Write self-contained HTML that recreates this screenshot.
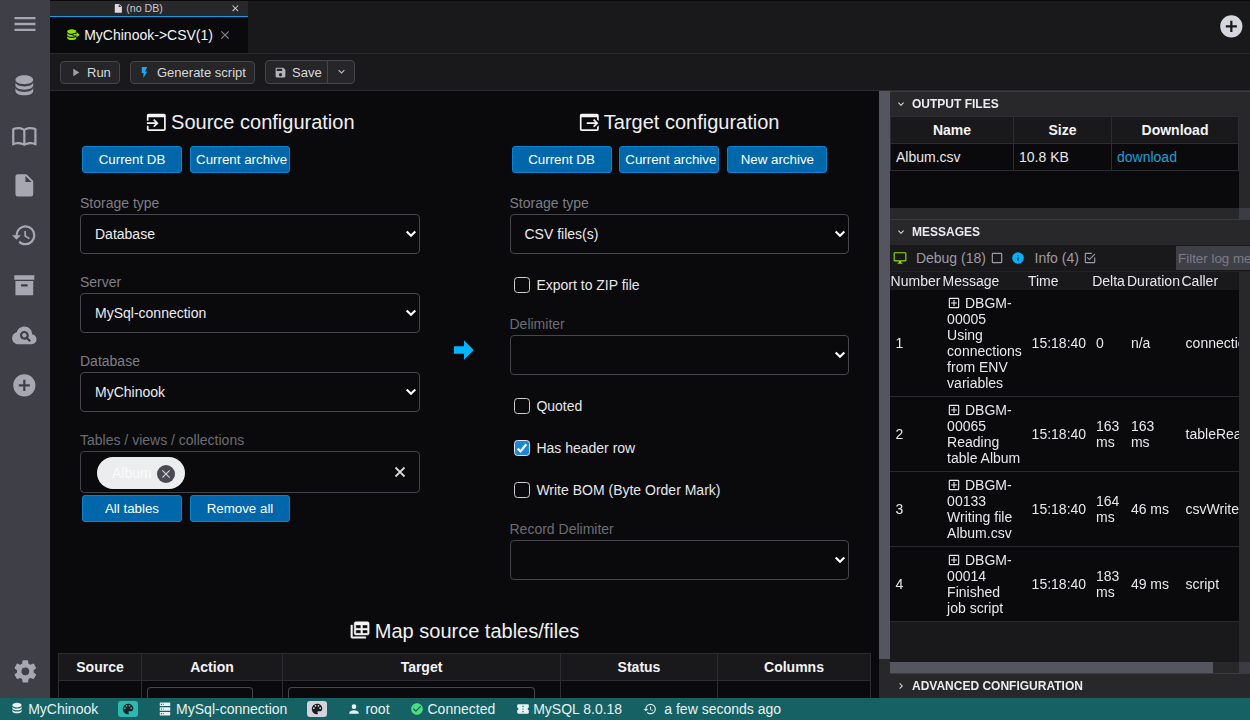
<!DOCTYPE html>
<html>
<head>
<meta charset="utf-8">
<title>DbGate</title>
<style>
*{box-sizing:border-box;}
html,body{margin:0;padding:0;}
body{width:1250px;height:720px;overflow:hidden;background:#0a0a0c;font-family:"Liberation Sans",sans-serif;font-size:14px;color:#dedee2;position:relative;}
.abs{position:absolute;}
svg{display:block;}
svg path{fill:currentColor;}
/* left icon bar */
#iconbar{left:0;top:0;width:50px;height:698px;background:#3f3f48;color:#a7a7b2;}
#iconbar svg{position:absolute;left:11.4px;width:26.67px;height:26.67px;}
/* tabs */
#tabsbar{left:50px;top:0;width:1200px;height:53px;background:#19191c;border-top:1px solid #0a0a0c;}
#dbgroup{left:50px;top:1px;width:198px;height:15px;background:#28282b;font-size:11px;color:#c9c9cf;}
#dbline{left:50px;top:16px;width:198px;height:1px;background:#0ca2ec;}
#tab{left:50px;top:17px;width:198px;height:36px;background:#0a0a0c;}
#toolbarline1{left:50px;top:53px;width:1200px;height:1px;background:#2a2a2e;}
#toolbar{left:50px;top:54px;width:1200px;height:36px;background:#19191c;}
#toolbarline2{left:50px;top:90px;width:1200px;height:1px;background:#2e2e32;}
.tbtn{position:absolute;top:61px;height:23px;border:1px solid #45454b;border-radius:4px;background:#262629;color:#d8d8dc;font-size:13px;}
/* main */
.h2{position:absolute;font-size:20px;color:#f0f0f3;white-space:nowrap;line-height:24px;}
.bbtn{position:absolute;width:100px;height:27px;background:#0068aa;border:1px solid #0683d2;border-radius:3px;color:#fff;font-size:13.33px;text-align:center;line-height:25px;white-space:nowrap;overflow:visible;}
.lbl{position:absolute;color:#7e7e86;font-size:14px;line-height:16px;white-space:nowrap;}
.sel{position:absolute;height:40px;border:1px solid #46464c;border-radius:4px;background:#0a0a0c;color:#ececf0;font-size:14px;line-height:38px;padding-left:14px;white-space:nowrap;}
.sel svg{position:absolute;right:2.4px;top:14px;width:12px;height:12px;color:#fff;}
.chk{position:absolute;width:16px;height:16px;border:1.5px solid #cfcfd3;border-radius:3.5px;background:#0a0a0c;}
.chklbl{position:absolute;font-size:14px;line-height:16px;color:#e6e6ea;white-space:nowrap;}
.mth{position:absolute;top:654px;height:26px;background:#19191c;color:#f4f4f6;font-weight:bold;font-size:14px;text-align:center;line-height:26px;}
.mtd{position:absolute;top:681px;height:17px;background:#0a0a0c;}
.inp{position:absolute;top:6px;height:20px;border:1px solid #46464c;border-bottom:none;border-radius:4px 4px 0 0;}
/* right panel */
.whead{position:absolute;left:890px;width:360px;background:#28282b;border-top:1px solid #3a3a40;font-size:12px;font-weight:bold;color:#ececf0;white-space:nowrap;}
.whead span{position:absolute;left:22px;top:5px;line-height:14px;will-change:transform;}
.whead svg{position:absolute;left:5px;top:5px;width:12px;height:12px;}
.oth,.otd{position:absolute;height:26px;line-height:26px;font-size:14px;white-space:nowrap;}
.oth{top:117px;background:#19191c;color:#f4f4f6;font-weight:bold;text-align:center;}
.otd{top:144px;background:#0a0a0c;color:#e8e8ec;padding-left:5px;}
.mc{position:absolute;font-size:14px;line-height:16px;white-space:nowrap;color:#e8e8ec;}
#statusbar{left:0;top:698px;width:1250px;height:22px;background:#156163;color:#e8f2f2;font-size:14px;}
#statusbar .it{position:absolute;top:0;line-height:22px;white-space:nowrap;}
#statusbar svg{position:absolute;}
</style>
</head>
<body>
<!-- ICON BAR -->
<div id="iconbar" class="abs">
<svg viewBox="0 0 24 24" style="top:10.05px;left:10.85px;width:28px;height:28px"><path d="M3,6H21V8H3V6M3,11H21V13H3V11M3,16H21V18H3V16Z"/></svg>
<svg viewBox="0 0 24 24" style="top:72.3px"><path d="M12,3C7.58,3 4,4.79 4,7C4,9.21 7.58,11 12,11C16.42,11 20,9.21 20,7C20,4.790 16.42,3 12,3M4,9V12C4,14.21 7.58,16 12,16C16.42,16 20,14.21 20,12V9C20,11.21 16.42,13 12,13C7.58,13 4,11.21 4,9M4,14V17C4,19.21 7.58,21 12,21C16.42,21 20,19.21 20,17V14C20,16.21 16.42,18 12,18C7.58,18 4,16.21 4,14Z"/></svg>
<svg viewBox="0 0 24 24" style="top:122.3px"><path d="M12 21.5C10.65 20.65 8.2 20 6.5 20C4.85 20 3.15 20.3 1.75 21.05C1.65 21.1 1.6 21.1 1.5 21.1C1.25 21.1 1 20.85 1 20.6V6C1.6 5.55 2.25 5.25 3 5C4.11 4.65 5.33 4.5 6.5 4.5C8.45 4.5 10.55 4.9 12 6C13.45 4.9 15.55 4.5 17.5 4.5C18.67 4.5 19.89 4.65 21 5C21.75 5.25 22.4 5.55 23 6V20.6C23 20.85 22.75 21.1 22.5 21.1C22.4 21.1 22.35 21.1 22.25 21.05C20.85 20.3 19.15 20 17.5 20C15.8 20 13.35 20.65 12 21.5M11 7.5C9.64 6.9 7.84 6.5 6.5 6.5C5.3 6.5 4.1 6.65 3 7V18.5C4.1 18.15 5.3 18 6.5 18C7.84 18 9.64 18.4 11 19V7.5M13 19C14.36 18.4 16.16 18 17.5 18C18.7 18 19.9 18.15 21 18.5V7C19.9 6.65 18.7 6.5 17.5 6.5C16.16 6.5 14.36 6.9 13 7.5V19Z"/></svg>
<svg viewBox="0 0 24 24" style="top:172.3px"><path d="M13,9V3.5L18.5,9M6,2C4.89,2 4,2.89 4,4V20A2,2 0 0,0 6,22H18A2,2 0 0,0 20,20V8L14,2H6Z"/></svg>
<svg viewBox="0 0 24 24" style="top:222.3px"><path d="M13.5,8H12V13L16.28,15.54L17,14.33L13.5,12.25V8M13,3A9,9 0 0,0 4,12H1L4.96,16.03L9,12H6A7,7 0 0,1 13,5A7,7 0 0,1 20,12A7,7 0 0,1 13,19C11.07,19 9.32,18.21 8.06,16.94L6.64,18.36C8.27,20 10.5,21 13,21A9,9 0 0,0 22,12A9,9 0 0,0 13,3"/></svg>
<svg viewBox="0 0 24 24" style="top:272.3px"><path d="M3,3H21V7H3V3M4,8H20V21H4V8M9.5,11A0.5,0.5 0 0,0 9,11.5V13H15V11.5A0.5,0.5 0 0,0 14.5,11H9.5Z"/></svg>
<svg viewBox="0 0 24 24" style="top:322.3px"><path d="M21.86 12.5C21.1 11.63 20.15 11.13 19 11C19 9.05 18.32 7.4 16.96 6.04C15.6 4.68 13.95 4 12 4C10.42 4 9 4.47 7.75 5.43S5.67 7.62 5.25 9.15C4 9.43 2.96 10.08 2.17 11.1S1 13.28 1 14.58C1 16.09 1.54 17.38 2.61 18.43C3.69 19.5 5 20 6.5 20H18.5C19.75 20 20.81 19.56 21.69 18.69C22.56 17.81 23 16.75 23 15.5C23 14.35 22.62 13.35 21.86 12.5M16.57 18L14 15.43C13.43 15.79 12.74 16 12 16C9.79 16 8 14.21 8 12S9.79 8 12 8 16 9.79 16 12C16 12.74 15.79 13.43 15.43 14L18 16.57L16.57 18M14 12C14 13.11 13.11 14 12 14S10 13.11 10 12 10.9 10 12 10 14 10.9 14 12Z"/></svg>
<svg viewBox="0 0 24 24" style="top:372.3px"><path d="M17,13H13V17H11V13H7V11H11V7H13V11H17M12,2A10,10 0 0,0 2,12A10,10 0 0,0 12,22A10,10 0 0,0 22,12A10,10 0 0,0 12,2Z"/></svg>
<svg viewBox="0 0 24 24" style="top:658.1px;left:12.1px"><path d="M12,15.5A3.5,3.5 0 0,1 8.5,12A3.5,3.5 0 0,1 12,8.5A3.5,3.5 0 0,1 15.5,12A3.5,3.5 0 0,1 12,15.5M19.43,12.97C19.47,12.65 19.5,12.33 19.5,12C19.5,11.67 19.47,11.34 19.43,11L21.54,9.37C21.73,9.22 21.78,8.95 21.66,8.73L19.66,5.27C19.54,5.05 19.27,4.96 19.05,5.05L16.56,6.05C16.04,5.66 15.5,5.32 14.87,5.07L14.5,2.42C14.46,2.18 14.25,2 14,2H10C9.75,2 9.54,2.18 9.5,2.42L9.13,5.07C8.5,5.32 7.96,5.66 7.44,6.05L4.95,5.05C4.73,4.96 4.46,5.05 4.34,5.27L2.34,8.73C2.21,8.95 2.27,9.22 2.46,9.37L4.57,11C4.53,11.34 4.5,11.67 4.5,12C4.5,12.33 4.53,12.65 4.57,12.97L2.46,14.63C2.27,14.78 2.21,15.05 2.34,15.27L4.34,18.73C4.46,18.95 4.73,19.03 4.95,18.95L7.44,17.94C7.96,18.34 8.5,18.68 9.13,18.93L9.5,21.58C9.54,21.82 9.75,22 10,22H14C14.25,22 14.46,21.82 14.5,21.58L14.87,18.93C15.5,18.67 16.04,18.34 16.56,17.94L19.05,18.95C19.27,19.03 19.54,18.95 19.66,18.73L21.66,15.27C21.78,15.05 21.73,14.78 21.54,14.63L19.43,12.97Z"/></svg>
</div>
<!-- TABS -->
<div id="tabsbar" class="abs"></div>
<div id="dbgroup" class="abs"><svg viewBox="0 0 24 24" style="position:absolute;left:63.2px;top:1.9px;width:10.67px;height:10.67px;color:#dcdce0;"><path d="M13,9V3.5L18.5,9M6,2C4.89,2 4,2.89 4,4V20A2,2 0 0,0 6,22H18A2,2 0 0,0 20,20V8L14,2H6Z"/></svg><span class="abs" style="left:76.2px;top:0;line-height:15px;font-size:10.67px;white-space:nowrap">(no DB)</span><svg viewBox="0 0 24 24" style="position:absolute;left:180.2px;top:2.1px;width:10.67px;height:10.67px;color:#d8d8dc;"><path d="M19,6.41L17.59,5L12,10.59L6.41,5L5,6.41L10.59,12L5,17.59L6.41,19L12,13.41L17.59,19L19,17.59L13.41,12L19,6.41Z"/></svg></div>
<div id="dbline" class="abs"></div>
<div id="tab" class="abs">
<svg viewBox="0 0 24 24" style="position:absolute;left:16px;top:10.5px;width:14px;height:14px;color:#8ee200"><path d="M10,2C5.58,2 2,3.79 2,6C2,8.21 5.58,10 10,10C14.42,10 18,8.21 18,6C18,3.79 14.42,2 10,2Z"/><path d="M2,8.300V11C2,13.21 5.58,15 10,15C14.42,15 18,13.21 18,11V8.300C18,10.510 14.42,12 10,12C5.58,12 2,10.510 2,8.300Z"/><path d="M2,13.300V16.500C2,18.71 5.58,20.5 10,20.5C14.42,20.5 18,18.710 18,16.500V13.300C18,15.510 14.42,17 10,17C5.58,17 2,15.510 2,13.300Z"/><path d="M12.800,10.300H18V7L23.400,11.600L18,16.200V12.900H12.800Z" style="stroke:#0a0a0c;stroke-width:2.600;paint-order:stroke;stroke-linejoin:round"/></svg>
<span class="abs" style="left:34.2px;top:9px;line-height:18px;font-size:14px;color:#f4f4f6;white-space:nowrap">MyChinook-&gt;CSV(1)</span>
<svg viewBox="0 0 24 24" style="position:absolute;left:167.8px;top:10.8px;width:14px;height:14px;color:#85858d;"><path d="M19,6.41L17.59,5L12,10.59L6.41,5L5,6.41L10.59,12L5,17.59L6.41,19L12,13.41L17.59,19L19,17.59L13.41,12L19,6.41Z"/></svg>
</div>
<svg viewBox="0 0 24 24" style="position:absolute;left:1218.2px;top:12.6px;width:26.67px;height:26.67px;color:#d6d6de;"><path d="M17,13H13V17H11V13H7V11H11V7H13V11H17M12,2A10,10 0 0,0 2,12A10,10 0 0,0 12,22A10,10 0 0,0 22,12A10,10 0 0,0 12,2Z"/></svg>
<div id="toolbarline1" class="abs"></div>
<div id="toolbar" class="abs"></div>
<div id="toolbarline2" class="abs"></div>
<div class="tbtn" style="left:60px;width:60px"><svg viewBox="0 0 24 24" style="position:absolute;left:7.5px;top:3.6px;width:13px;height:13px;color:#a0a0a8;"><path d="M8,5.14V19.14L19,12.14L8,5.14Z"/></svg><span class="abs" style="left:26px;top:0;line-height:21px">Run</span></div>
<div class="tbtn" style="left:130px;width:125px"><svg viewBox="0 0 24 24" style="position:absolute;left:7.3px;top:3.6px;width:13px;height:13px;color:#1ea8f2;"><path d="M7,2V13H10V22L17,10H13L17,2H7Z"/></svg><span class="abs" style="left:26px;top:0;line-height:21px">Generate script</span></div>
<div class="tbtn" style="left:265px;width:63px;top:60px;height:24px;border-radius:4px 0 0 4px"><svg viewBox="0 0 24 24" style="position:absolute;left:7.6px;top:4.7px;width:13px;height:13px;color:#b4b4bc;"><path d="M15,9H5V5H15M12,19A3,3 0 0,1 9,16A3,3 0 0,1 12,13A3,3 0 0,1 15,16A3,3 0 0,1 12,19M17,3H5C3.89,3 3,3.9 3,5V19A2,2 0 0,0 5,21H19A2,2 0 0,0 21,19V7L17,3Z"/></svg><span class="abs" style="left:26px;top:1px;line-height:22px">Save</span></div>
<div class="tbtn" style="left:327px;width:28px;top:60px;height:24px;border-radius:0 4px 4px 0"><svg viewBox="0 0 24 24" style="position:absolute;left:6.5px;top:4.4px;width:13px;height:13px;color:#c4c4cc;"><path d="M7.41,8.58L12,13.17L16.59,8.58L18,10L12,16L6,10L7.41,8.58Z"/></svg></div>
<!-- MAIN -->
<div id="main">
<svg viewBox="0 0 24 24" style="position:absolute;left:145.5px;top:111.6px;width:20.6px;height:20.6px;color:#f4f4f6"><path d="M1 12H10.8L8.3 9.5L9.7 8.1L14.6 13L9.7 17.9L8.3 16.5L10.8 14H1V12M21 2H3C1.9 2 1 2.9 1 4V10.1H3V6H21V20H3V16H1V20C1 21.1 1.9 22 3 22H21C22.1 22 23 21.1 23 20V4C23 2.9 22.1 2 21 2Z"/></svg><span class="h2" style="left:171.1px;top:110px">Source configuration</span>
<div class="bbtn" style="left:82px;top:146px">Current DB</div>
<div class="bbtn" style="left:190px;top:146px"><span style="position:absolute;left:5px;top:0">Current archive</span></div>
<span class="lbl" style="left:80px;top:195px">Storage type</span>
<div class="sel" style="left:80px;top:214px;width:340px">Database<svg viewBox="0 0 12 12"><path d="M1.700,2.400L6,6.700L10.300,2.400" style="fill:none;stroke:#fff;stroke-width:2.100"/></svg></div>
<span class="lbl" style="left:80px;top:274px">Server</span>
<div class="sel" style="left:80px;top:293px;width:340px">MySql-connection<svg viewBox="0 0 12 12"><path d="M1.700,2.400L6,6.700L10.300,2.400" style="fill:none;stroke:#fff;stroke-width:2.100"/></svg></div>
<span class="lbl" style="left:80px;top:353px">Database</span>
<div class="sel" style="left:80px;top:372px;width:340px">MyChinook<svg viewBox="0 0 12 12"><path d="M1.700,2.400L6,6.700L10.300,2.400" style="fill:none;stroke:#fff;stroke-width:2.100"/></svg></div>
<span class="lbl" style="left:80px;top:432px;color:#6c6c74">Tables / views / collections</span>
<div class="abs" style="left:80px;top:451px;width:340px;height:42px;border:1px solid #42424a;border-radius:4px"></div>
<div class="abs" style="left:97px;top:457px;width:88px;height:32px;border-radius:16px;background:#ecedef;color:#fbfbfc;font-size:14px;line-height:32px;padding-left:15px">Album</div>
<div class="abs" style="left:157px;top:465px;width:18px;height:18px;border-radius:9px;background:#4a4a52"><svg viewBox="0 0 24 24" style="position:absolute;left:2px;top:2px;width:14px;height:14px;color:#d4d4d8"><path d="M19,6.41L17.59,5L12,10.59L6.41,5L5,6.41L10.59,12L5,17.59L6.41,19L12,13.41L17.59,19L19,17.59L13.41,12L19,6.41Z"/></svg></div>
<svg viewBox="0 0 12 12" style="position:absolute;left:394.3px;top:466px;width:12px;height:12px"><path d="M1.500,1.500L10.500,10.500M10.500,1.500L1.500,10.500" style="fill:none;stroke:#d4d4d8;stroke-width:1.900"/></svg>
<div class="bbtn" style="left:82px;top:495px">All tables</div>
<div class="bbtn" style="left:190px;top:495px">Remove all</div>

<svg viewBox="0 0 24 24" style="position:absolute;left:449px;top:334.7px;width:30px;height:30px;color:#00b4ff"><path d="M4,15V9H12V4.16L19.84,12L12,19.84V15H4Z"/></svg>

<svg viewBox="0 0 24 24" style="position:absolute;left:578.8px;top:111.6px;width:20.6px;height:20.6px;color:#f4f4f6"><path d="M9 12H18.8L16.3 9.5L17.7 8.1L22.6 13L17.7 17.9L16.3 16.5L18.8 14H9V12M21 17.4V20H3V6H21V8.6L23 10.6V4C23 2.9 22.1 2 21 2H3C1.9 2 1 2.9 1 4V20C1 21.1 1.9 22 3 22H21C22.1 22 23 21.1 23 20V15.4L21 17.4Z"/></svg><span class="h2" style="left:603.8px;top:110px">Target configuration</span>
<div class="bbtn" style="left:512px;top:146px"><span style="position:relative;left:-0.5px">Current DB</span></div>
<div class="bbtn" style="left:619px;top:146px"><span style="position:absolute;left:5.300px;top:0">Current archive</span></div>
<div class="bbtn" style="left:727px;top:146px"><span style="position:relative;left:0.3px">New archive</span></div>
<span class="lbl" style="left:509.5px;top:195px">Storage type</span>
<div class="sel" style="left:510px;top:214px;width:339px;padding-left:13.5px">CSV files(s)<svg viewBox="0 0 12 12"><path d="M1.700,2.400L6,6.700L10.300,2.400" style="fill:none;stroke:#fff;stroke-width:2.100"/></svg></div>
<div class="chk" style="left:514px;top:277px"></div><span class="chklbl" style="left:536.4px;top:277.2px">Export to ZIP file</span>
<span class="lbl" style="left:509.5px;top:316px;color:#6c6c74">Delimiter</span>
<div class="sel" style="left:510px;top:335px;width:339px"><svg viewBox="0 0 12 12"><path d="M1.700,2.400L6,6.700L10.300,2.400" style="fill:none;stroke:#fff;stroke-width:2.100"/></svg></div>
<div class="chk" style="left:514px;top:398px"></div><span class="chklbl" style="left:536.4px;top:398.2px">Quoted</span>
<div class="chk" style="left:514px;top:440px;background:#1a86d8;border-color:#e4e4ea"><svg viewBox="0 0 16 16" style="position:absolute;left:-1.5px;top:-1.5px;width:16px;height:16px"><path d="M3.600,8.600L6.500,11.400L12.300,4.300" style="fill:none;stroke:#fff;stroke-width:2.200"/></svg></div><span class="chklbl" style="left:536.4px;top:440.2px">Has header row</span>
<div class="chk" style="left:514px;top:482px"></div><span class="chklbl" style="left:536.4px;top:482.2px">Write BOM (Byte Order Mark)</span>
<span class="lbl" style="left:509.5px;top:521px;color:#6c6c74">Record Delimiter</span>
<div class="sel" style="left:510px;top:540px;width:339px"><svg viewBox="0 0 12 12"><path d="M1.700,2.400L6,6.700L10.300,2.400" style="fill:none;stroke:#fff;stroke-width:2.100"/></svg></div>

<svg viewBox="0 0 24 24" style="position:absolute;left:349.7px;top:620.2px;width:20px;height:20px;color:#f4f4f6"><path style="stroke:#f4f4f6;stroke-width:0.5" d="M7 2H21C22.11 2 23 2.9 23 4V16C23 17.11 22.11 18 21 18H7C5.9 18 5 17.11 5 16V4C5 2.9 5.9 2 7 2M7 6V10H13V6H7M15 6V10H21V6H15M7 12V16H13V12H7M15 12V16H21V12H15M3 20V6H1V20C1 21.11 1.89 22 3 22H19V20H3Z"/></svg><span class="h2" style="left:374.8px;top:618.5px">Map source tables/files</span>
<div class="abs" style="left:58px;top:653px;width:813px;height:45px;background:#2e2e32"></div>
<div class="mth" style="left:59px;width:82px">Source</div>
<div class="mth" style="left:142px;width:140px">Action</div>
<div class="mth" style="left:283px;width:277px">Target</div>
<div class="mth" style="left:561px;width:156px">Status</div>
<div class="mth" style="left:718px;width:152px">Columns</div>
<div class="mtd" style="left:59px;width:82px"></div>
<div class="mtd" style="left:142px;width:140px"><div class="inp" style="left:5px;width:106px"></div></div>
<div class="mtd" style="left:283px;width:277px"><div class="inp" style="left:5px;width:247px"></div></div>
<div class="mtd" style="left:561px;width:156px"></div>
<div class="mtd" style="left:718px;width:152px"></div>
<!-- main scrollbar -->
<div class="abs" style="left:879px;top:91px;width:11px;height:607px;background:#28282b"></div>
<div class="abs" style="left:879px;top:91px;width:11px;height:568px;background:#55555f"></div>
</div>
<!-- RIGHT PANEL -->
<div id="right">
<div class="abs" style="left:890px;top:91px;width:360px;height:607px;background:#19191c"></div>
<div class="whead" style="top:91px;height:25px"><svg viewBox="0 0 24 24" style="position:absolute;left:5px;top:6px;width:12px;height:12px;color:#d8d8dc"><path d="M7.41,8.58L12,13.17L16.59,8.58L18,10L12,16L6,10L7.41,8.58Z"/></svg><span style="left:22px;top:6px;line-height:13.8px">OUTPUT FILES</span></div>
<div class="abs" style="left:890px;top:116px;width:349px;height:92px;background:#0a0a0c"></div>
<div class="abs" style="left:1239px;top:116px;width:11px;height:92px;background:#28282b"></div>
<div class="abs" style="left:890px;top:116px;width:349px;height:55px;background:#2e2e32"></div>
<div class="oth" style="left:891px;width:122px">Name</div>
<div class="oth" style="left:1014px;width:97px">Size</div>
<div class="oth" style="left:1112px;width:126px">Download</div>
<div class="otd" style="left:891px;width:122px">Album.csv</div>
<div class="otd" style="left:1014px;width:97px">10.8 KB</div>
<div class="otd" style="left:1112px;width:126px;color:#14a0da">download</div>
<div class="abs" style="left:890px;top:208px;width:349px;height:11px;background:#28282b"></div>
<div class="abs" style="left:1239px;top:208px;width:11px;height:11px;background:#3c3c44"></div>
<div class="whead" style="top:219px;height:26px"><svg viewBox="0 0 24 24" style="position:absolute;left:5px;top:6px;width:12px;height:12px;color:#d8d8dc"><path d="M7.41,8.58L12,13.17L16.59,8.58L18,10L12,16L6,10L7.41,8.58Z"/></svg><span style="left:22px;top:6px;line-height:13.8px">MESSAGES</span></div>
<div class="abs" style="left:890px;top:245px;width:360px;height:27px;background:#19191c"></div>
<svg viewBox="0 0 24 24" style="position:absolute;left:893.2px;top:250.8px;width:14px;height:14px;color:#88de00"><path d="M21,16H3V4H21M21,2H3C1.89,2 1,2.89 1,4V16A2,2 0 0,0 3,18H10V20H8V22H16V20H14V18H21A2,2 0 0,0 23,16V4C23,2.89 22.1,2 21,2Z"/></svg><span class="mc" style="left:915.9px;top:250.200px;color:#9c9ca6">Debug (18)</span><svg viewBox="0 0 24 24" style="position:absolute;left:989.85px;top:250.7px;width:14px;height:14px;color:#9c9ca6"><path d="M19,3H5C3.89,3 3,3.89 3,5V19A2,2 0 0,0 5,21H19A2,2 0 0,0 21,19V5C21,3.89 20.1,3 19,3M19,5V19H5V5H19Z"/></svg>
<svg viewBox="0 0 24 24" style="position:absolute;left:1011.4px;top:250.5px;width:14px;height:14px;color:#00b2ff"><path d="M13,9H11V7H13M13,17H11V11H13M12,2A10,10 0 0,0 2,12A10,10 0 0,0 12,22A10,10 0 0,0 22,12A10,10 0 0,0 12,2Z"/></svg><span class="mc" style="left:1034.5px;top:250.200px;color:#9c9ca6">Info (4)</span><svg viewBox="0 0 24 24" style="position:absolute;left:1082.65px;top:250.7px;width:14px;height:14px;color:#9c9ca6"><path d="M19,19H5V5H15V3H5C3.89,3 3,3.89 3,5V19A2,2 0 0,0 5,21H19A2,2 0 0,0 21,19V11H19M7.91,10.08L6.5,11.5L11,16L21,6L19.59,4.58L11,13.17L7.91,10.08Z"/></svg>
<div class="abs" style="left:1176px;top:246px;width:80px;height:24px;background:#3f3f48;color:#7c7c86;font-size:13.33px;line-height:26px;padding-left:2.1px;white-space:nowrap;overflow:hidden">Filter log messages</div>
<div class="abs" style="left:890px;top:271px;width:360px;height:1px;background:#222225"></div>
<div class="abs" style="left:1239px;top:272px;width:11px;height:390px;background:#28282b"></div>
<div class="abs" style="left:0;top:0;width:1239px;height:300px;will-change:transform;clip-path:inset(272px 0 0 890px)"><span class="mc" style="left:890.6px;top:273px">Number</span><span class="mc" style="left:942.6px;top:273px">Message</span><span class="mc" style="left:1027.9px;top:273px">Time</span><span class="mc" style="left:1092.2px;top:273px">Delta</span><span class="mc" style="left:1127px;top:273px">Duration</span><span class="mc" style="left:1181.5px;top:273px">Caller</span></div>
<div id="mrows" class="abs" style="left:0;top:0;width:1239px;height:700px;overflow:hidden;clip-path:inset(272px 0 0 890px);will-change:transform">
<div class="abs" style="left:890px;top:290px;width:349px;height:106px;background:#0a0a0c"></div><div class="abs" style="left:890px;top:396px;width:349px;height:1px;background:#2a2a2e"></div><span class="mc" style="left:895.6px;top:335.0px">1</span><span class="mc" style="left:947.1px;top:295.0px"><span style="display:inline-block;width:17.9px"></span>DBGM-</span><span class="mc" style="left:947.1px;top:311.0px">00005</span><span class="mc" style="left:947.1px;top:327.0px">Using</span><span class="mc" style="left:947.1px;top:343.0px">connections</span><span class="mc" style="left:947.1px;top:359.0px">from ENV</span><span class="mc" style="left:947.1px;top:375.0px">variables</span><svg viewBox="0 0 24 24" style="position:absolute;left:946.8px;top:296px;width:14px;height:14px;color:#e8e8ec"><path d="M19,19V5H5V19H19M19,3A2,2 0 0,1 21,5V19A2,2 0 0,1 19,21H5A2,2 0 0,1 3,19V5C3,3.89 3.9,3 5,3H19M11,7H13V11H17V13H13V17H11V13H7V11H11V7Z"/></svg><span class="mc" style="left:1031.6px;top:335.0px">15:18:40</span><span class="mc" style="left:1096px;top:335.0px">0</span><span class="mc" style="left:1130.9px;top:335.0px">n/a</span><span class="mc" style="left:1185.6px;top:335.0px">connectio</span><div class="abs" style="left:890px;top:397px;width:349px;height:74px;background:#0a0a0c"></div><div class="abs" style="left:890px;top:471px;width:349px;height:1px;background:#2a2a2e"></div><span class="mc" style="left:895.6px;top:426.0px">2</span><span class="mc" style="left:947.1px;top:402.0px"><span style="display:inline-block;width:17.9px"></span>DBGM-</span><span class="mc" style="left:947.1px;top:418.0px">00065</span><span class="mc" style="left:947.1px;top:434.0px">Reading</span><span class="mc" style="left:947.1px;top:450.0px">table Album</span><svg viewBox="0 0 24 24" style="position:absolute;left:946.8px;top:403px;width:14px;height:14px;color:#e8e8ec"><path d="M19,19V5H5V19H19M19,3A2,2 0 0,1 21,5V19A2,2 0 0,1 19,21H5A2,2 0 0,1 3,19V5C3,3.89 3.9,3 5,3H19M11,7H13V11H17V13H13V17H11V13H7V11H11V7Z"/></svg><span class="mc" style="left:1031.6px;top:426.0px">15:18:40</span><span class="mc" style="left:1096px;top:418.0px">163</span><span class="mc" style="left:1096px;top:434.0px">ms</span><span class="mc" style="left:1130.9px;top:418.0px">163</span><span class="mc" style="left:1130.9px;top:434.0px">ms</span><span class="mc" style="left:1185.6px;top:426.0px">tableRea</span><div class="abs" style="left:890px;top:472px;width:349px;height:74px;background:#0a0a0c"></div><div class="abs" style="left:890px;top:546px;width:349px;height:1px;background:#2a2a2e"></div><span class="mc" style="left:895.6px;top:501.0px">3</span><span class="mc" style="left:947.1px;top:477.0px"><span style="display:inline-block;width:17.9px"></span>DBGM-</span><span class="mc" style="left:947.1px;top:493.0px">00133</span><span class="mc" style="left:947.1px;top:509.0px">Writing file</span><span class="mc" style="left:947.1px;top:525.0px">Album.csv</span><svg viewBox="0 0 24 24" style="position:absolute;left:946.8px;top:478px;width:14px;height:14px;color:#e8e8ec"><path d="M19,19V5H5V19H19M19,3A2,2 0 0,1 21,5V19A2,2 0 0,1 19,21H5A2,2 0 0,1 3,19V5C3,3.89 3.9,3 5,3H19M11,7H13V11H17V13H13V17H11V13H7V11H11V7Z"/></svg><span class="mc" style="left:1031.6px;top:501.0px">15:18:40</span><span class="mc" style="left:1096px;top:493.0px">164</span><span class="mc" style="left:1096px;top:509.0px">ms</span><span class="mc" style="left:1130.9px;top:501.0px">46 ms</span><span class="mc" style="left:1185.6px;top:501.0px">csvWrite</span><div class="abs" style="left:890px;top:547px;width:349px;height:74px;background:#0a0a0c"></div><div class="abs" style="left:890px;top:621px;width:349px;height:1px;background:#2a2a2e"></div><span class="mc" style="left:895.6px;top:576.0px">4</span><span class="mc" style="left:947.1px;top:552.0px"><span style="display:inline-block;width:17.9px"></span>DBGM-</span><span class="mc" style="left:947.1px;top:568.0px">00014</span><span class="mc" style="left:947.1px;top:584.0px">Finished</span><span class="mc" style="left:947.1px;top:600.0px">job script</span><svg viewBox="0 0 24 24" style="position:absolute;left:946.8px;top:553px;width:14px;height:14px;color:#e8e8ec"><path d="M19,19V5H5V19H19M19,3A2,2 0 0,1 21,5V19A2,2 0 0,1 19,21H5A2,2 0 0,1 3,19V5C3,3.89 3.9,3 5,3H19M11,7H13V11H17V13H13V17H11V13H7V11H11V7Z"/></svg><span class="mc" style="left:1031.6px;top:576.0px">15:18:40</span><span class="mc" style="left:1096px;top:568.0px">183</span><span class="mc" style="left:1096px;top:584.0px">ms</span><span class="mc" style="left:1130.9px;top:576.0px">49 ms</span><span class="mc" style="left:1185.6px;top:576.0px">script</span>
</div>
<div class="abs" style="left:890px;top:662px;width:349px;height:11px;background:#28282b"></div>
<div class="abs" style="left:890px;top:662px;width:323px;height:11px;background:#55555f"></div>
<div class="abs" style="left:1239px;top:662px;width:11px;height:11px;background:#3c3c44"></div>
<div class="whead" style="top:673px;height:25px"><svg viewBox="0 0 24 24" style="position:absolute;left:5px;top:6px;width:12px;height:12px;color:#d8d8dc"><path d="M8.59,16.58L13.17,12L8.59,7.41L10,6L16,12L10,18L8.59,16.58Z"/></svg><span style="left:22px;top:6px;line-height:13.8px">ADVANCED CONFIGURATION</span></div>
</div>
<!-- STATUS BAR -->
<div id="statusbar" class="abs">
<svg viewBox="0 0 24 24" style="position:absolute;left:10px;top:3.3px;width:14px;height:14px;"><path d="M12,3C7.58,3 4,4.79 4,7C4,9.21 7.58,11 12,11C16.42,11 20,9.21 20,7C20,4.79 16.42,3 12,3M4,9V12C4,14.21 7.58,16 12,16C16.42,16 20,14.21 20,12V9C20,11.21 16.42,13 12,13C7.58,13 4,11.21 4,9M4,14V17C4,19.21 7.58,21 12,21C16.42,21 20,19.21 20,17V14C20,16.21 16.42,18 12,18C7.58,18 4,16.21 4,14Z"/></svg><span class="it" style="left:28.2px">MyChinook</span>
<div class="abs" style="left:118px;top:3px;width:20px;height:16px;background:#2db8b2;border-radius:3px"><svg viewBox="0 0 24 24" style="position:absolute;left:3px;top:1px;width:14px;height:14px;color:#142626;"><path d="M17.5,12A1.5,1.5 0 0,1 16,10.5A1.5,1.5 0 0,1 17.5,9A1.5,1.5 0 0,1 19,10.5A1.5,1.5 0 0,1 17.5,12M14.5,8A1.5,1.5 0 0,1 13,6.5A1.5,1.5 0 0,1 14.5,5A1.5,1.5 0 0,1 16,6.5A1.5,1.5 0 0,1 14.5,8M9.5,8A1.5,1.5 0 0,1 8,6.5A1.5,1.5 0 0,1 9.5,5A1.5,1.5 0 0,1 11,6.5A1.5,1.5 0 0,1 9.5,8M6.5,12A1.5,1.5 0 0,1 5,10.5A1.5,1.5 0 0,1 6.5,9A1.5,1.5 0 0,1 8,10.5A1.5,1.5 0 0,1 6.5,12M12,3A9,9 0 0,0 3,12A9,9 0 0,0 12,21A1.5,1.5 0 0,0 13.5,19.5C13.5,19.11 13.35,18.76 13.11,18.5C12.88,18.23 12.73,17.88 12.73,17.5A1.5,1.5 0 0,1 14.23,16H16A5,5 0 0,0 21,11C21,6.58 16.97,3 12,3Z"/></svg></div>
<svg viewBox="0 0 24 24" style="position:absolute;left:157.6px;top:3.7px;width:14px;height:14px;"><path d="M4,1H20A1,1 0 0,1 21,2V6A1,1 0 0,1 20,7H4A1,1 0 0,1 3,6V2A1,1 0 0,1 4,1M4,9H20A1,1 0 0,1 21,10V14A1,1 0 0,1 20,15H4A1,1 0 0,1 3,14V10A1,1 0 0,1 4,9M4,17H20A1,1 0 0,1 21,18V22A1,1 0 0,1 20,23H4A1,1 0 0,1 3,22V18A1,1 0 0,1 4,17M9,5H10V3H9V5M9,13H10V11H9V13M9,21H10V19H9V21M5,3V5H7V3H5M5,11V13H7V11H5M5,19V21H7V19H5Z"/></svg><span class="it" style="left:176.1px">MySql-connection</span>
<div class="abs" style="left:307px;top:3px;width:20px;height:16px;background:#d3d3db;border-radius:3px"><svg viewBox="0 0 24 24" style="position:absolute;left:3px;top:1px;width:14px;height:14px;color:#1c1c22;"><path d="M17.5,12A1.5,1.5 0 0,1 16,10.5A1.5,1.5 0 0,1 17.5,9A1.5,1.5 0 0,1 19,10.5A1.5,1.5 0 0,1 17.5,12M14.5,8A1.5,1.5 0 0,1 13,6.5A1.5,1.5 0 0,1 14.5,5A1.5,1.5 0 0,1 16,6.5A1.5,1.5 0 0,1 14.5,8M9.5,8A1.5,1.5 0 0,1 8,6.5A1.5,1.5 0 0,1 9.5,5A1.5,1.5 0 0,1 11,6.5A1.5,1.5 0 0,1 9.5,8M6.5,12A1.5,1.5 0 0,1 5,10.5A1.5,1.5 0 0,1 6.5,9A1.5,1.5 0 0,1 8,10.5A1.5,1.5 0 0,1 6.5,12M12,3A9,9 0 0,0 3,12A9,9 0 0,0 12,21A1.5,1.5 0 0,0 13.5,19.5C13.5,19.11 13.35,18.76 13.11,18.5C12.88,18.23 12.73,17.88 12.73,17.5A1.5,1.5 0 0,1 14.23,16H16A5,5 0 0,0 21,11C21,6.58 16.97,3 12,3Z"/></svg></div>
<svg viewBox="0 0 24 24" style="position:absolute;left:347px;top:3.7px;width:14px;height:14px;"><path d="M12,4A4,4 0 0,1 16,8A4,4 0 0,1 12,12A4,4 0 0,1 8,8A4,4 0 0,1 12,4M12,14C16.42,14 20,15.79 20,18V20H4V18C4,15.79 7.58,14 12,14Z"/></svg><span class="it" style="left:365.4px">root</span>
<svg viewBox="0 0 24 24" style="position:absolute;left:409.8px;top:3.5px;width:14px;height:14px;color:#4ade80;"><path d="M12 2C6.5 2 2 6.5 2 12S6.5 22 12 22 22 17.5 22 12 17.5 2 12 2M10 17L5 12L6.41 10.59L10 14.17L17.59 6.58L19 8L10 17Z"/></svg><span class="it" style="left:427.5px">Connected</span>
<svg viewBox="0 0 24 24" style="position:absolute;left:515.5px;top:3.7px;width:14px;height:14px;"><path d="M13,8.5H11V6.5H13V8.5M13,13H11V11H13V13M13,17.500H11V15.5H13V17.5M22,10V6C22,4.89 21.1,4 20,4H4A2,2 0 0,0 2,6V10C3.11,10 4,10.9 4,12A2,2 0 0,1 2,14V18A2,2 0 0,0 4,20H20A2,2 0 0,0 22,18V14A2,2 0 0,1 20,12A2,2 0 0,1 22,10Z"/></svg><span class="it" style="left:533.2px">MySQL 8.0.18</span>
<svg viewBox="0 0 24 24" style="position:absolute;left:642.7px;top:3.7px;width:14px;height:14px;"><path d="M13.5,8H12V13L16.28,15.54L17,14.33L13.5,12.25V8M13,3A9,9 0 0,0 4,12H1L4.96,16.03L9,12H6A7,7 0 0,1 13,5A7,7 0 0,1 20,12A7,7 0 0,1 13,19C11.07,19 9.32,18.21 8.06,16.94L6.64,18.36C8.27,20 10.5,21 13,21A9,9 0 0,0 22,12A9,9 0 0,0 13,3"/></svg><span class="it" style="left:664.3px">a few seconds ago</span>
</div>
</body>
</html>
